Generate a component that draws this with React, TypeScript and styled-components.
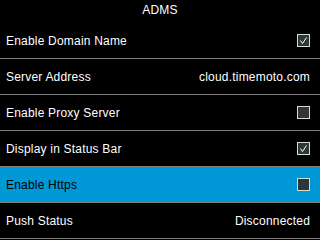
import React from "react";
import styled, { createGlobalStyle } from "styled-components";

const Global = createGlobalStyle`
  html, body { margin: 0; padding: 0; background: #000; }
  body { width: 320px; height: 240px; overflow: hidden; font-family: "Liberation Sans", Arial, sans-serif; }
`;

const Screen = styled.div`
  width: 320px;
  height: 240px;
  background: #000;
  display: flex;
  flex-direction: column;
`;

const Title = styled.div`
  height: 23px;
  line-height: 21px;
  text-align: center;
  color: #fff;
  font-size: 12px;
  letter-spacing: 0.2px;
`;

const Row = styled.div<{ $active?: boolean }>`
  height: 35px;
  border-bottom: 1px solid #7f7f7f;
  background: ${(p) => (p.$active ? "#0098d7" : "#000")};
  color: ${(p) => (p.$active ? "#000" : "#fff")};
  display: flex;
  align-items: center;
  justify-content: space-between;
  padding: 0 10px 0 6px;
  font-size: 12px;
  letter-spacing: 0.2px;
`;

const Value = styled.span`
  color: inherit;
`;

const Box = styled.span`
  width: 11px;
  height: 11px;
  border: 1px solid #d9d9d9;
  background: #2d3834;
  display: flex;
  align-items: center;
  justify-content: center;
`;

const Check: React.FC<{ checked: boolean }> = ({ checked }) => (
  <Box>
    {checked && (
      <svg width="11" height="11" viewBox="0 0 11 11">
        <path d="M2.5 5.5 L4.5 8.5 L8.5 2.5" stroke="#fff" strokeWidth="1" fill="none" />
      </svg>
    )}
  </Box>
);

type Item = { label: string; value?: string; checked?: boolean; active?: boolean };

const items: Item[] = [
  { label: "Enable Domain Name", checked: true },
  { label: "Server Address", value: "cloud.timemoto.com" },
  { label: "Enable Proxy Server", checked: false },
  { label: "Display in Status Bar", checked: true },
  { label: "Enable Https", checked: false, active: true },
  { label: "Push Status", value: "Disconnected" },
];

export default function App() {
  return (
    <>
      <Global />
      <Screen>
        <Title>ADMS</Title>
        {items.map((it) => (
          <Row key={it.label} $active={it.active}>
            <span>{it.label}</span>
            {it.value !== undefined ? <Value>{it.value}</Value> : <Check checked={!!it.checked} />}
          </Row>
        ))}
      </Screen>
    </>
  );
}
